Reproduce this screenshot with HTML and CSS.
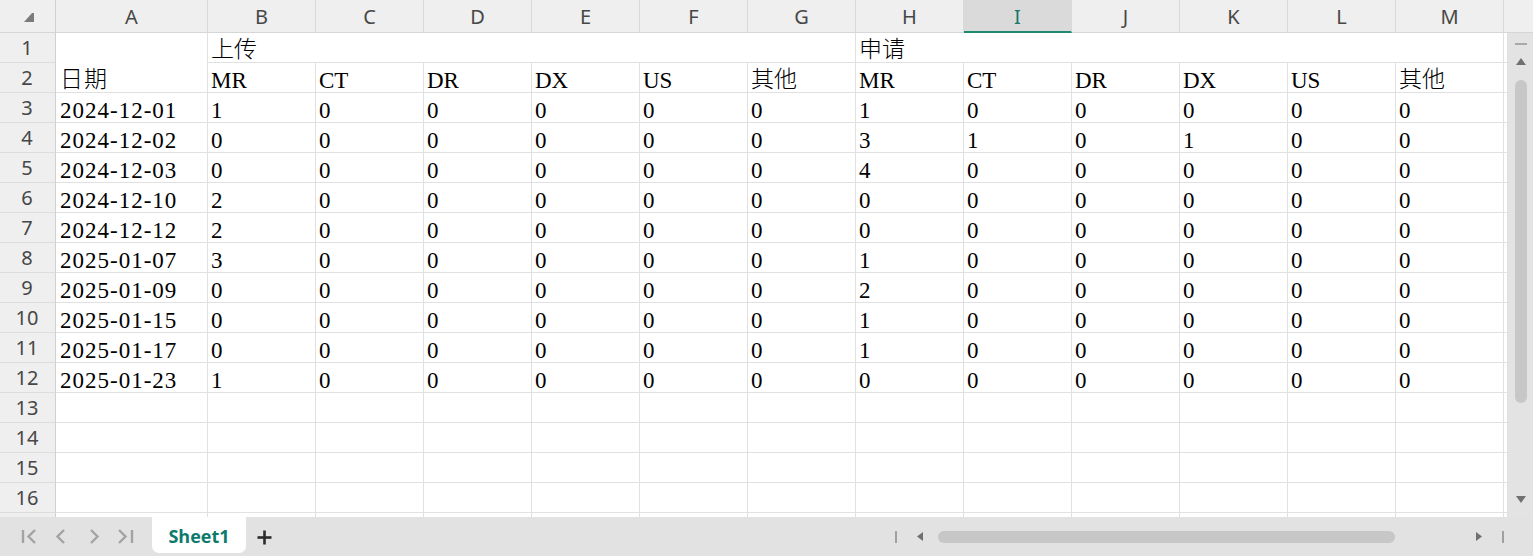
FILE: index.html
```html
<!DOCTYPE html>
<html lang="zh-CN">
<head>
<meta charset="utf-8">
<title>Sheet1</title>
<link rel="stylesheet" href="styles.css">
</head>
<body>
<div class="app">
  <div class="colhead">
    <div class="ch corner"><svg class="corner-tri" width="12" height="11" viewBox="0 0 12 11"><polygon points="1,10 11,10 11,1 9,1" fill="#7b7b7b"/></svg></div>
    <div class="ch">A</div><div class="ch">B</div><div class="ch">C</div><div class="ch">D</div><div class="ch">E</div><div class="ch">F</div><div class="ch">G</div><div class="ch">H</div><div class="ch sel">I</div><div class="ch">J</div><div class="ch">K</div><div class="ch">L</div><div class="ch">M</div><div class="ch rest"></div>
  </div>
  <div class="main">
    <div class="grid">
      <div class="rh">1</div><div class="c a m2 cjk">日期</div><div class="c s6 cjk">上传</div><div class="c s6 cjk">申请</div><div class="c n"></div>
      <div class="rh">2</div><div class="c">MR</div><div class="c">CT</div><div class="c">DR</div><div class="c">DX</div><div class="c">US</div><div class="c cjk">其他</div><div class="c">MR</div><div class="c">CT</div><div class="c">DR</div><div class="c">DX</div><div class="c">US</div><div class="c cjk">其他</div><div class="c n"></div>
      <div class="rh">3</div><div class="c a">2024-12-01</div><div class="c">1</div><div class="c">0</div><div class="c">0</div><div class="c">0</div><div class="c">0</div><div class="c">0</div><div class="c">1</div><div class="c">0</div><div class="c">0</div><div class="c">0</div><div class="c">0</div><div class="c">0</div><div class="c n"></div>
      <div class="rh">4</div><div class="c a">2024-12-02</div><div class="c">0</div><div class="c">0</div><div class="c">0</div><div class="c">0</div><div class="c">0</div><div class="c">0</div><div class="c">3</div><div class="c">1</div><div class="c">0</div><div class="c">1</div><div class="c">0</div><div class="c">0</div><div class="c n"></div>
      <div class="rh">5</div><div class="c a">2024-12-03</div><div class="c">0</div><div class="c">0</div><div class="c">0</div><div class="c">0</div><div class="c">0</div><div class="c">0</div><div class="c">4</div><div class="c">0</div><div class="c">0</div><div class="c">0</div><div class="c">0</div><div class="c">0</div><div class="c n"></div>
      <div class="rh">6</div><div class="c a">2024-12-10</div><div class="c">2</div><div class="c">0</div><div class="c">0</div><div class="c">0</div><div class="c">0</div><div class="c">0</div><div class="c">0</div><div class="c">0</div><div class="c">0</div><div class="c">0</div><div class="c">0</div><div class="c">0</div><div class="c n"></div>
      <div class="rh">7</div><div class="c a">2024-12-12</div><div class="c">2</div><div class="c">0</div><div class="c">0</div><div class="c">0</div><div class="c">0</div><div class="c">0</div><div class="c">0</div><div class="c">0</div><div class="c">0</div><div class="c">0</div><div class="c">0</div><div class="c">0</div><div class="c n"></div>
      <div class="rh">8</div><div class="c a">2025-01-07</div><div class="c">3</div><div class="c">0</div><div class="c">0</div><div class="c">0</div><div class="c">0</div><div class="c">0</div><div class="c">1</div><div class="c">0</div><div class="c">0</div><div class="c">0</div><div class="c">0</div><div class="c">0</div><div class="c n"></div>
      <div class="rh">9</div><div class="c a">2025-01-09</div><div class="c">0</div><div class="c">0</div><div class="c">0</div><div class="c">0</div><div class="c">0</div><div class="c">0</div><div class="c">2</div><div class="c">0</div><div class="c">0</div><div class="c">0</div><div class="c">0</div><div class="c">0</div><div class="c n"></div>
      <div class="rh">10</div><div class="c a">2025-01-15</div><div class="c">0</div><div class="c">0</div><div class="c">0</div><div class="c">0</div><div class="c">0</div><div class="c">0</div><div class="c">1</div><div class="c">0</div><div class="c">0</div><div class="c">0</div><div class="c">0</div><div class="c">0</div><div class="c n"></div>
      <div class="rh">11</div><div class="c a">2025-01-17</div><div class="c">0</div><div class="c">0</div><div class="c">0</div><div class="c">0</div><div class="c">0</div><div class="c">0</div><div class="c">1</div><div class="c">0</div><div class="c">0</div><div class="c">0</div><div class="c">0</div><div class="c">0</div><div class="c n"></div>
      <div class="rh">12</div><div class="c a">2025-01-23</div><div class="c">1</div><div class="c">0</div><div class="c">0</div><div class="c">0</div><div class="c">0</div><div class="c">0</div><div class="c">0</div><div class="c">0</div><div class="c">0</div><div class="c">0</div><div class="c">0</div><div class="c">0</div><div class="c n"></div>
      <div class="rh">13</div><div class="c a"></div><div class="c"></div><div class="c"></div><div class="c"></div><div class="c"></div><div class="c"></div><div class="c"></div><div class="c"></div><div class="c"></div><div class="c"></div><div class="c"></div><div class="c"></div><div class="c"></div><div class="c n"></div>
      <div class="rh">14</div><div class="c a"></div><div class="c"></div><div class="c"></div><div class="c"></div><div class="c"></div><div class="c"></div><div class="c"></div><div class="c"></div><div class="c"></div><div class="c"></div><div class="c"></div><div class="c"></div><div class="c"></div><div class="c n"></div>
      <div class="rh">15</div><div class="c a"></div><div class="c"></div><div class="c"></div><div class="c"></div><div class="c"></div><div class="c"></div><div class="c"></div><div class="c"></div><div class="c"></div><div class="c"></div><div class="c"></div><div class="c"></div><div class="c"></div><div class="c n"></div>
      <div class="rh">16</div><div class="c a"></div><div class="c"></div><div class="c"></div><div class="c"></div><div class="c"></div><div class="c"></div><div class="c"></div><div class="c"></div><div class="c"></div><div class="c"></div><div class="c"></div><div class="c"></div><div class="c"></div><div class="c n"></div>
      <div class="rh last"></div><div class="c a last"></div><div class="c last"></div><div class="c last"></div><div class="c last"></div><div class="c last"></div><div class="c last"></div><div class="c last"></div><div class="c last"></div><div class="c last"></div><div class="c last"></div><div class="c last"></div><div class="c last"></div><div class="c last"></div><div class="c n last"></div>
    </div>
    <div class="vscroll">
      <div class="vdash"></div>
      <svg class="vup" width="10" height="7" viewBox="0 0 10 7"><polygon points="5,0 10,7 0,7" fill="#707070"/></svg>
      <div class="vthumb"></div>
      <svg class="vdown" width="10" height="7" viewBox="0 0 10 7"><polygon points="0,0 10,0 5,7" fill="#707070"/></svg>
    </div>
  </div>
  <div class="bottombar">
    <div class="nav">
      <svg width="152" height="39" viewBox="0 0 152 39">
        <g fill="none" stroke="#a3a3a3" stroke-width="2.4" stroke-linecap="butt" stroke-linejoin="miter">
          <line x1="23" y1="13" x2="23" y2="26"/>
          <polyline points="35,13 28.5,19.5 35,26"/>
          <polyline points="64,13 57.5,19.5 64,26"/>
          <polyline points="91,13 97.5,19.5 91,26"/>
          <polyline points="119,13 125.5,19.5 119,26"/>
          <line x1="132" y1="13" x2="132" y2="26"/>
        </g>
      </svg>
    </div>
    <div class="tab">Sheet1</div>
    <div class="add"><svg width="15" height="15" viewBox="0 0 15 15"><g stroke="#2b2b2b" stroke-width="2.6"><line x1="7.5" y1="0.5" x2="7.5" y2="14.5"/><line x1="0.5" y1="7.5" x2="14.5" y2="7.5"/></g></svg></div>
    <div class="hscroll">
      <div class="hbar"></div>
      <svg class="hleft" width="6" height="9" viewBox="0 0 6 9"><polygon points="6,0 6,9 0,4.5" fill="#707070"/></svg>
      <div class="hthumb"></div>
      <svg class="hright" width="6" height="9" viewBox="0 0 6 9"><polygon points="0,0 6,4.5 0,9" fill="#707070"/></svg>
      <div class="hbar hbar-end"></div>
    </div>
  </div>
</div>
</body>
</html>
```

FILE: styles.css
```css
html, body {
  margin: 0;
  padding: 0;
  background: #ffffff;
  overflow: hidden;
}

.app {
  width: 1533px;
  height: 556px;
  display: flex;
  flex-direction: column;
  font-family: "Noto Sans", "Open Sans", sans-serif;
}

/* column header */
.colhead {
  display: grid;
  grid-template-columns: 56px 152px repeat(12, 108px) 1fr;
  height: 33px;
  flex: none;
  background: #efefef;
  position: relative;
  z-index: 1;
}

.ch {
  box-sizing: border-box;
  border-right: 1px solid #d9d9d9;
  border-bottom: 1px solid #d6d6d6;
  display: flex;
  align-items: center;
  justify-content: center;
  font-size: 20px;
  color: #474747;
}

.ch.corner {
  position: relative;
  border-right-color: #d0d0d0;
}

.corner-tri {
  position: absolute;
  left: 23px;
  top: 12px;
}

.ch.sel {
  background: #dadada;
  color: #177a6b;
  border-bottom: 2px solid #1e8a6e;
  padding-top: 1px;
}

.ch.rest {
  border-right: none;
}

/* body */
.main {
  display: flex;
  height: 484px;
  flex: none;
}

.grid {
  display: grid;
  grid-template-columns: 56px 152px repeat(12, 108px) 4px;
  grid-template-rows: repeat(16, 30px) 4px;
  width: 1508px;
  flex: none;
}

.c {
  box-sizing: border-box;
  border-right: 1px solid #e1e1e1;
  border-bottom: 1px solid #e1e1e1;
  font-family: "Liberation Serif", "Noto Sans CJK SC", serif;
  font-size: 23px;
  line-height: 23px;
  padding-left: 3px;
  display: flex;
  align-items: flex-end;
  white-space: nowrap;
  overflow: hidden;
  color: #000;
}

.c.cjk {
  font-family: "Noto Sans CJK SC", sans-serif;
  font-weight: 300;
  line-height: 24px;
  padding-bottom: 3px;
  overflow: visible;
}

.c.a {
  padding-left: 4px;
  letter-spacing: 1px;
}

.c.m2 {
  grid-row: span 2;
}

.c.s6 {
  grid-column: span 6;
}

.c.n {
  padding: 0;
}

.rh {
  box-sizing: border-box;
  background: #efefef;
  border-right: 1px solid #d0d0d0;
  border-bottom: 1px solid #dcdcdc;
  display: flex;
  align-items: center;
  justify-content: center;
  font-size: 20px;
  color: #474747;
  padding-right: 1px;
}

.last {
  border-bottom: none;
}

/* vertical scrollbar */
.vscroll {
  width: 25px;
  background: #e3e3e3;
  display: flex;
  flex-direction: column;
  align-items: center;
  flex: none;
}

.vdash {
  margin-top: 10px;
  width: 12px;
  height: 2px;
  background: #a8a8a8;
}

.vup {
  margin-top: 13px;
  display: block;
}

.vthumb {
  margin-top: 15px;
  width: 12px;
  height: 323px;
  border-radius: 6px;
  background: #c7c7c7;
}

.vdown {
  margin-top: 93px;
  display: block;
}

/* bottom bar */
.bottombar {
  flex: 1;
  background: #e2e2e2;
  display: flex;
  align-items: flex-start;
}

.nav {
  width: 152px;
  height: 39px;
  flex: none;
}

.nav svg {
  display: block;
}

.tab {
  width: 94px;
  height: 36px;
  flex: none;
  background: #ffffff;
  border-radius: 0 0 7px 7px;
  display: flex;
  align-items: center;
  justify-content: center;
  font-family: "Open Sans", "Noto Sans", sans-serif;
  font-weight: 700;
  font-size: 18px;
  color: #0c7b6c;
  padding-top: 1px;
  box-sizing: border-box;
}

.add {
  margin-left: 11px;
  padding-top: 13px;
  flex: none;
}

.add svg {
  display: block;
}

.hscroll {
  margin-left: auto;
  width: 638px;
  height: 39px;
  display: flex;
  align-items: center;
  flex: none;
}

.hbar {
  width: 2px;
  height: 12px;
  background: #a0a0a0;
  flex: none;
}

.hleft {
  margin-left: 20px;
  display: block;
  flex: none;
}

.hthumb {
  margin-left: 15px;
  width: 457px;
  height: 12px;
  border-radius: 6px;
  background: #c7c7c7;
  flex: none;
}

.hright {
  margin-left: 81px;
  display: block;
  flex: none;
}

.hbar-end {
  margin-left: 20px;
}
```
